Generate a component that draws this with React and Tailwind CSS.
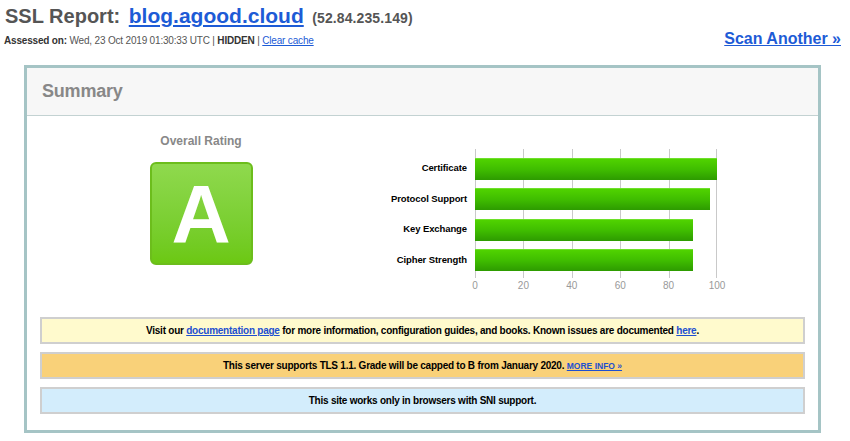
import React from "react";

const scores = [
  { label: "Certificate", value: 100 },
  { label: "Protocol Support", value: 97 },
  { label: "Key Exchange", value: 90 },
  { label: "Cipher Strength", value: 90 },
];

const ticks = [0, 20, 40, 60, 80, 100];
const CHART_W = 242;

const App = () => {
  return (
    <div className="w-[850px] h-[441px] bg-white font-['Liberation_Sans',Arial,sans-serif] overflow-hidden">
      {/* Top bar */}
      <div className="flex items-end justify-between pl-[5px] pr-[9px] pt-[4px]">
        <div>
          <h1 className="text-[20px] leading-[24px] font-bold text-[#555]">
            SSL Report:{" "}
            <a href="#" className="ml-[3px] text-[21px] text-[#1d5bd6] underline">
              blog.agood.cloud
            </a>{" "}
            <span className="ml-[3px] text-[14px] tracking-[0.1px]">(52.84.235.149)</span>
          </h1>
          <div className="text-[10px] leading-[12px] mt-[5px] text-[#555] -ml-[1px] tracking-[-0.18px]">
            <span className="font-bold text-[#333]">Assessed on:</span>{" "}
            Wed, 23 Oct 2019 01:30:33 UTC |{" "}
            <span className="font-bold text-[#333]">HIDDEN</span> |{" "}
            <a href="#" className="text-[#1d5bd6] underline">
              Clear cache
            </a>
          </div>
        </div>
        <a
          href="#"
          className="text-[16px] leading-[18px] font-bold text-[#1d5bd6] underline mb-[-1px]"
        >
          Scan Another »
        </a>
      </div>

      {/* Summary box */}
      <div className="ml-[24px] mt-[18px] w-[797px] border-[3px] border-[#a5c4c5] bg-white">
        <div className="h-[48px] bg-[#f7f7f7] border-b border-[#c3d2d2] flex items-center pl-[15px]">
          <h2 className="text-[18px] font-bold text-[#888] tracking-[-0.2px]">Summary</h2>
        </div>

        <div className="flex">
          {/* Overall rating */}
          <div className="w-[348px] flex flex-col items-center pt-[18px]">
            <div className="text-[12px] leading-[14px] font-bold text-[#888]">
              Overall Rating
            </div>
            <div className="mt-[14px] w-[103px] h-[103px] rounded-[6px] border-2 border-[#6cbd1c] bg-gradient-to-b from-[#8fd94d] to-[#6cc812] flex items-center justify-center">
              <span className="text-[82px] leading-none font-bold text-white">A</span>
            </div>
          </div>

          {/* Chart */}
          <div className="pt-[33px]">
            <div className="flex">
              <div className="w-[92px] mr-[8px] flex flex-col gap-[8.5px] pt-[8.5px]">
                {scores.map((s) => (
                  <div
                    key={s.label}
                    className="h-[22px] flex items-center justify-end text-[9.5px] tracking-[-0.1px] font-bold text-black whitespace-nowrap"
                  >
                    {s.label}
                  </div>
                ))}
              </div>
              <div className="relative w-[242px] h-[129px]">
                {ticks.map((t) => (
                  <div
                    key={t}
                    className="absolute top-0 bottom-0 w-px bg-[#c9c9c9]"
                    style={{ left: Math.min((t / 100) * CHART_W, CHART_W - 1) }}
                  />
                ))}
                <div className="relative flex flex-col gap-[8.5px] pt-[8.5px]">
                  {scores.map((s) => (
                    <div
                      key={s.label}
                      className="h-[22px] bg-gradient-to-b from-[#50d300] via-[#3fbd00] to-[#2d9b00] border-t border-[#6ee02a]"
                      style={{ width: (s.value / 100) * CHART_W }}
                    />
                  ))}
                </div>
              </div>
            </div>
            <div className="relative ml-[100px] w-[242px] h-[14px] mt-[2px]">
              {ticks.map((t) => (
                <span
                  key={t}
                  className="absolute top-0 -translate-x-1/2 text-[10px] leading-[12px] text-[#999]"
                  style={{ left: (t / 100) * CHART_W }}
                >
                  {t}
                </span>
              ))}
            </div>
          </div>
        </div>

        {/* Notices */}
        <div className="mx-[13px] mt-[23px] mb-[16px] flex flex-col gap-[8px] text-[10px] tracking-[-0.24px] font-bold text-black">
          <div className="h-[27px] border-2 border-[#cfcfcf] bg-[#fffacd] flex items-center justify-center">
            <span>
              Visit our{" "}
              <a href="#" className="text-[#1d4fd0] underline">
                documentation page
              </a>{" "}
              for more information, configuration guides, and books. Known issues are documented{" "}
              <a href="#" className="text-[#1d4fd0] underline">
                here
              </a>
              .
            </span>
          </div>
          <div className="h-[27px] border-2 border-[#cfcfcf] bg-[#f9d179] flex items-center justify-center">
            <span>
              This server supports TLS 1.1. Grade will be capped to B from January 2020.{" "}
              <a href="#" className="text-[8.5px] tracking-normal text-[#1d4fd0] underline">
                MORE INFO »
              </a>
            </span>
          </div>
          <div className="h-[27px] border-2 border-[#cfcfcf] bg-[#d3edfc] flex items-center justify-center">
            <span>This site works only in browsers with SNI support.</span>
          </div>
        </div>
      </div>
    </div>
  );
};

export default App;
